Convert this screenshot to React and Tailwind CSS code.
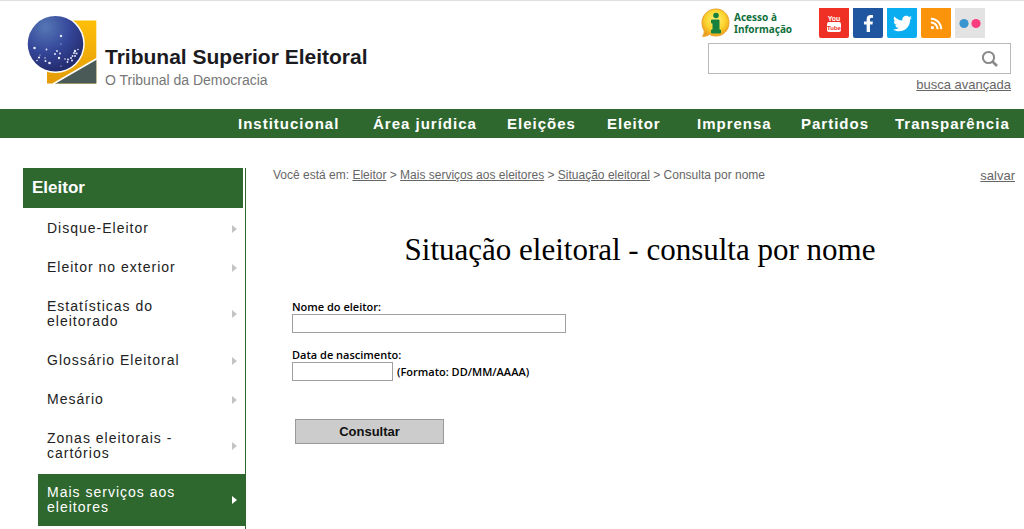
import { FaFacebookF, FaTwitter, FaRss } from "react-icons/fa";

const NAV_LINKS = ["Institucional", "Área jurídica", "Eleições", "Eleitor", "Imprensa", "Partidos", "Transparência"];

const MENU_ITEMS = [
  { label: "Disque-Eleitor" },
  { label: "Eleitor no exterior" },
  { label: "Estatísticas do eleitorado" },
  { label: "Glossário Eleitoral" },
  { label: "Mesário" },
  { label: "Zonas eleitorais - cartórios" },
  { label: "Mais serviços aos eleitores", active: true },
];

const STARS = [
  [41, 28, 1.2], [41, 36, 0.6], [14.5, 40, 1.3], [26.5, 41.5, 0.9], [20, 47, 0.6], [19, 49.5, 1.1], [17, 52.5, 0.8],
  [25, 50, 0.7], [25.5, 53, 1], [29.5, 55, 1.3], [35, 46, 1], [37, 43, 0.9], [40, 45.5, 0.9], [39, 50, 1.2],
  [45, 51, 0.8], [48, 51.5, 1], [47.5, 54, 0.9], [51, 50, 1], [52.5, 48, 0.9], [52, 52.5, 1], [54, 45, 1],
  [55, 43, 1.2], [56.5, 45.5, 1.1], [55, 48, 1], [58, 41.5, 0.8], [41, 58, 0.6],
];

function Logo() {
  return (
    <svg width="70" height="70" viewBox="0 0 70 70" className="shrink-0" aria-hidden="true">
      <defs>
        <radialGradient id="globe" cx="0.32" cy="0.2" r="0.8">
          <stop offset="0" stopColor="#5577b5" />
          <stop offset="0.55" stopColor="#35479a" />
          <stop offset="1" stopColor="#242c70" />
        </radialGradient>
        <linearGradient id="gold" x1="0" y1="0" x2="0" y2="1">
          <stop offset="0" stopColor="#ffbf08" />
          <stop offset="1" stopColor="#e39c08" />
        </linearGradient>
      </defs>
      <path d="M20 5.500H69.300V68.500H20Z" fill="url(#gold)" />
      <path d="M69.300 44V68.500H27Z" fill="#4a5a57" />
      <path d="M26 69L70 43.500" stroke="#fff" strokeWidth="1.6" />
      <circle cx="28.500" cy="28.800" r="29.300" fill="#fff" />
      <circle cx="28.500" cy="28.800" r="27.800" fill="url(#globe)" />
      <g fill="#e4e8f8" transform="translate(-7 -7)">
        {STARS.map(([x, y, r]) => (
          <circle key={`${x}-${y}`} cx={x} cy={y} r={r} />
        ))}
      </g>
    </svg>
  );
}

function InfoIcon() {
  return (
    <svg width="29" height="30" viewBox="0 0 29 30" aria-hidden="true">
      <defs>
        <radialGradient id="balloon" cx="0.5" cy="0.4" r="0.6">
          <stop offset="0" stopColor="#fff27a" />
          <stop offset="0.6" stopColor="#fbd42e" />
          <stop offset="1" stopColor="#eda01c" />
        </radialGradient>
      </defs>
      <path d="M15 1C22.500 1 28 7 28 14.500S22.500 28 15 28C12 28 10 27.300 8.500 26.200C6.500 27.800 4 28.500 1.500 28.300C3 26.500 3.500 24.500 3 22C1.500 20 1 17.500 1 14.500C1 7 7.500 1 15 1Z" fill="url(#balloon)" stroke="#e8a12b" />
      <circle cx="15" cy="7.500" r="2.800" fill="#16803f" />
      <path d="M10.500 12H18V22H19.500V25H10.500V22H12V15H10.500Z" fill="#16803f" stroke="#16803f" strokeLinejoin="round" />
    </svg>
  );
}

function YoutubeIcon() {
  return (
    <svg width="30" height="30" viewBox="0 0 30 30" aria-hidden="true">
      <text x="15" y="13" textAnchor="middle" fill="#fff" fontFamily="Liberation Sans Narrow, Liberation Sans, sans-serif" fontWeight="700" fontSize="7">You</text>
      <rect x="8" y="14" width="14" height="10" rx="2" fill="#fff" />
      <text x="15" y="21.500" textAnchor="middle" fill="#ee3124" fontFamily="Liberation Sans Narrow, Liberation Sans, sans-serif" fontWeight="700" fontSize="6">Tube</text>
    </svg>
  );
}

function FlickrIcon() {
  return (
    <svg width="30" height="30" viewBox="0 0 30 30" aria-hidden="true">
      <circle cx="9" cy="15.500" r="4.600" fill="#3a94cf" />
      <circle cx="21" cy="15.500" r="4.600" fill="#fb3d80" />
    </svg>
  );
}

function SearchIcon() {
  return (
    <svg width="18" height="18" viewBox="0 0 18 18" fill="none" stroke="#8a8a8a" aria-hidden="true">
      <circle cx="7.500" cy="7.500" r="5.600" strokeWidth="2" />
      <path d="M11.500 11.500L16 16" strokeWidth="2.600" />
    </svg>
  );
}

function Header() {
  return (
    <header className="flex justify-between border-t border-[#e0e0e0] pr-[13px] pl-[27px]">
      <a href="#" className="flex gap-2 pt-3.5 pb-5">
        <Logo />
        <span className="pt-7">
          <span className="block text-[21px] leading-7 font-bold text-[#1b1b1f]">Tribunal Superior Eleitoral</span>
          <span className="block text-sm leading-[18px] text-[#777]">O Tribunal da Democracia</span>
        </span>
      </a>
      <div className="flex w-[303px] flex-col pt-[7px]">
        <div className="-ml-[7px] flex items-center justify-between pr-[26px]">
          <a href="#" className="flex items-center gap-1">
            <InfoIcon />
            <span className="font-['Noto_Sans',sans-serif] text-[10px] leading-3 font-bold text-[#11703c]">
              Acesso à<br />Informação
            </span>
          </a>
          <div className="flex gap-1">
            <a href="#" aria-label="YouTube" className="size-[30px] rounded-b-xs bg-[#ee3124]"><YoutubeIcon /></a>
            <a href="#" aria-label="Facebook" className="flex size-[30px] items-center justify-center rounded-b-xs bg-[#20559f] text-white"><FaFacebookF size={17} /></a>
            <a href="#" aria-label="Twitter" className="flex size-[30px] items-center justify-center rounded-b-xs bg-[#0aaef0] text-white"><FaTwitter size={19} /></a>
            <a href="#" aria-label="RSS" className="flex size-[30px] items-center justify-center rounded-b-xs bg-[#fb940b] text-white"><FaRss size={13} /></a>
            <a href="#" aria-label="Flickr" className="size-[30px] bg-[#e3e3e3]"><FlickrIcon /></a>
          </div>
        </div>
        <form className="mt-[5px] flex h-[31px] border border-[#b9b9b9]">
          <input type="search" aria-label="Busca" className="min-w-0 flex-1 px-2 text-sm outline-none" />
          <button type="button" aria-label="Buscar" className="px-[11px]"><SearchIcon /></button>
        </form>
        <a href="#" className="mt-0.5 self-end text-[13px] leading-[18px] text-[#666] underline">busca avançada</a>
      </div>
    </header>
  );
}

function NavBar() {
  return (
    <nav className="flex justify-end bg-[#2f682f] pr-[15px]">
      <ul className="grid grid-cols-[135px_134px_100px_90px_104px_94px_114px] text-[15px] leading-[29px] font-bold tracking-[1px] whitespace-nowrap text-white">
        {NAV_LINKS.map((label) => (
          <li key={label}><a href="#">{label}</a></li>
        ))}
      </ul>
    </nav>
  );
}

function Sidebar() {
  return (
    <aside className="ml-[23px] w-[223px] shrink-0 border-r border-[#2f682f]">
      <h2 className="mr-0.5 bg-[#2f682f] pl-[9px] text-[17px] leading-10 font-bold text-white">Eleitor</h2>
      <ul className="ml-[15px] flex flex-col gap-0.5 pt-0.5 pb-2 text-sm leading-[15px] tracking-[1px]">
        {MENU_ITEMS.map(({ label, active }) => (
          <li key={label}>
            <a
              href="#"
              className={`flex items-center justify-between py-[11px] pr-2 pl-[9px] ${active ? "bg-[#2f682f] text-white" : "text-[#222]"}`}
            >
              <span className="w-36">{label}</span>
              <svg width="5" height="8" viewBox="0 0 5 8" className={active ? "fill-white" : "fill-[#c4c4c4]"} aria-hidden="true">
                <path d="M0 0L5 4L0 8Z" />
              </svg>
            </a>
          </li>
        ))}
      </ul>
    </aside>
  );
}

function Breadcrumb() {
  return (
    <div className="flex justify-between leading-[15px] text-[#666]">
      <p className="text-xs leading-[15px]">
        Você está em: <a href="#" className="underline">Eleitor</a> &gt;{" "}
        <a href="#" className="underline">Mais serviços aos eleitores</a> &gt;{" "}
        <a href="#" className="underline">Situação eleitoral</a> &gt; Consulta por nome
      </p>
      <a href="#" className="text-[13px] leading-4 underline">salvar</a>
    </div>
  );
}

export default function App() {
  return (
    <div className="min-h-screen overflow-x-hidden bg-white font-['Liberation_Sans',Arial,sans-serif]">
      <Header />
      <NavBar />
      <div className="flex pt-[30px]">
        <Sidebar />
        <main className="flex-1 pr-[9px] pl-[27px]">
          <Breadcrumb />
          <h1 className="mt-12 pr-2 text-center font-['Liberation_Serif',Georgia,serif] text-[31px] leading-9 text-black">
            Situação eleitoral - consulta por nome
          </h1>
          <form className="mt-[31px] ml-[19px] font-['Open_Sans',sans-serif] text-[11px] leading-[15px] font-semibold text-black">
            <label htmlFor="nome" className="block">Nome do eleitor:</label>
            <input id="nome" type="text" className="block h-[19px] w-[274px] border border-[#a0a0a0] px-1" />
            <label htmlFor="nascimento" className="mt-3.5 block">Data de nascimento:</label>
            <div className="flex items-center gap-1">
              <input id="nascimento" type="text" className="h-[19px] w-[101px] border border-[#a0a0a0] px-1" />
              <span>(Formato: DD/MM/AAAA)</span>
            </div>
            <button type="button" className="mt-[38px] ml-[3px] h-[25px] w-[149px] border border-[#999] bg-[#ccc] font-['Liberation_Sans',Arial,sans-serif] text-[13px] font-bold text-[#111]">
              Consultar
            </button>
          </form>
        </main>
      </div>
    </div>
  );
}
